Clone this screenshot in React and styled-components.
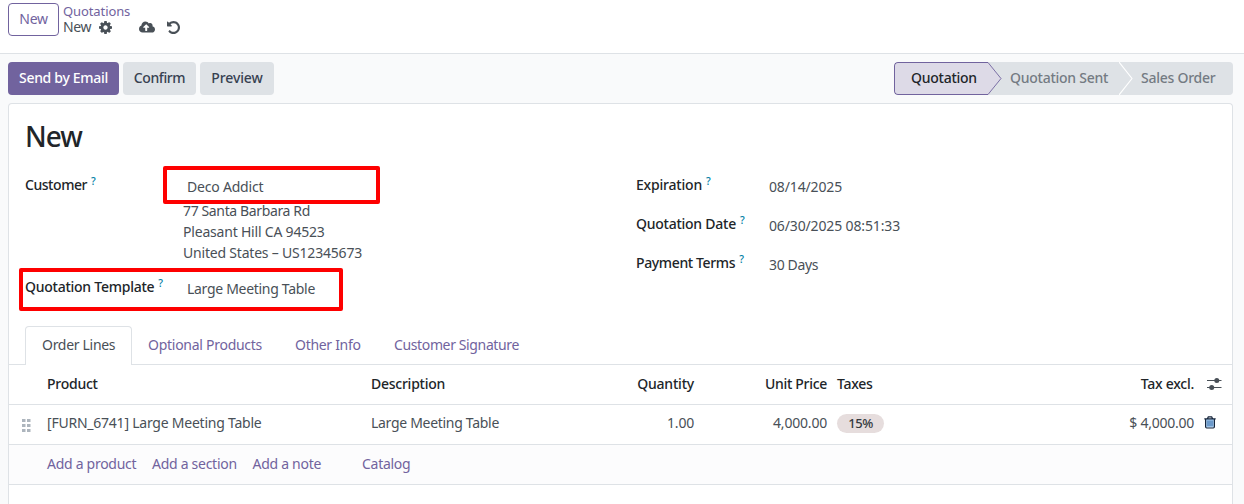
import React from 'react';
import styled, { createGlobalStyle } from 'styled-components';
import { FaCloudUploadAlt } from 'react-icons/fa';

const Global = createGlobalStyle`
  *, *::before, *::after { box-sizing: border-box; }
  body {
    margin: 0;
    background: #f9fafb;
    color: #495057;
    font: 400 14px/21px "Noto Sans", "Open Sans", sans-serif;
  }
  button { font: inherit; cursor: pointer; }
  svg { display: block; flex: none; }
`;

const Page = styled.div`
  height: 504px;
  overflow: hidden;
  display: flex;
  flex-direction: column;
`;

const ControlPanel = styled.header`
  height: 54px;
  flex: none;
  display: flex;
  align-items: flex-start;
  gap: 4px;
  padding: 3px 8px 0;
  background: #fff;
  border-bottom: 1px solid #dee2e6;
`;

const NewButton = styled.button`
  width: 51px;
  height: 33px;
  padding: 0 0 2px;
  border: 1px solid #71639e;
  border-radius: 4px;
  background: #fff;
  color: #71639e;
  letter-spacing: -0.3px;
`;

const Breadcrumb = styled.nav`
  display: flex;
  flex-direction: column;
`;

const CrumbLink = styled.a`
  color: #71639e;
  font-size: 13px;
  line-height: 17px;
  letter-spacing: -0.1px;
`;

const CrumbCurrent = styled.div`
  display: flex;
  align-items: center;
  height: 14px;
  line-height: 14px;
  letter-spacing: -0.35px;
`;

const CrumbName = styled.span`
  padding-bottom: 1px;
`;

const CrumbIcon = styled.span`
  margin-left: ${(p) => p.$gap}px;
  color: #495057;
`;

const Toolbar = styled.div`
  display: flex;
  flex: none;
  align-items: center;
  gap: 4px;
  height: 49px;
  padding: 0 11px 0 8px;
`;

const ActionButton = styled.button`
  width: ${(p) => p.$width}px;
  height: 33px;
  padding: 0 0 2px;
  border: 0;
  border-radius: 4px;
  background: ${(p) => (p.$primary ? '#71639e' : '#dee2e6')};
  color: ${(p) => (p.$primary ? '#fff' : '#374151')};
  font-weight: 500;
  letter-spacing: ${(p) => p.$ls}px;
  white-space: nowrap;
`;

const StatusBar = styled.div`
  display: flex;
  height: 33px;
  margin-left: auto;
  border-radius: 4px;
  overflow: hidden;
  background: #dee2e6;
`;

const Stage = styled.div`
  width: ${(p) => p.$width}px;
  padding: 5px 0 0 ${(p) => p.$pad}px;
  color: ${(p) => (p.$active ? '#212529' : '#747b83')};
  font-weight: 500;
  letter-spacing: -0.25px;
  white-space: nowrap;
  ${(p) => p.$active && `
    padding-top: 4px;
    background: #dddae7;
    border: 1px solid #71639e;
    border-right: 0;
    border-radius: 4px 0 0 4px;
  `}
`;

const Sheet = styled.main`
  position: relative;
  flex: 1;
  margin: 0 11px 0 8px;
  padding-top: 13px;
  background: #fff;
  border: 1px solid #dee2e6;
  border-bottom: 0;
  border-radius: 4px 4px 0 0;
`;

const Title = styled.h1`
  margin: 0 16px;
  color: #212529;
  font-size: 28px;
  font-weight: 500;
  line-height: 38px;
  letter-spacing: -1px;
`;

const Groups = styled.div`
  display: grid;
  grid-template-columns: 611px 1fr;
  height: 153px;
  padding: 19px 16px 0;
`;

const Group = styled.div`
  display: grid;
  grid-template-columns: ${(p) => p.$label}px 1fr;
  align-content: start;
  row-gap: ${(p) => p.$gap}px;
`;

const Label = styled.label`
  color: #212529;
  font-weight: 500;
  letter-spacing: ${(p) => p.$ls ?? -0.25}px;
  white-space: nowrap;
`;

const Help = styled.sup`
  margin-left: 4px;
  color: #0180a5;
  font-size: 10.5px;
  font-weight: 500;
  line-height: 0;
  vertical-align: 5px;
`;

const Value = styled.div`
  padding-top: 2px;
  letter-spacing: ${(p) => p.$ls ?? -0.2}px;
  white-space: nowrap;
`;

const Address = styled.div`
  padding: 3px 0 13px;
  margin-left: -4px;
`;

const AddressLine = styled.div`
  letter-spacing: ${(p) => p.$ls ?? -0.2}px;
`;

const Highlight = styled.div`
  position: absolute;
  left: ${(p) => p.$x}px;
  top: ${(p) => p.$y}px;
  width: ${(p) => p.$w}px;
  height: ${(p) => p.$h}px;
  border: 4px solid #fe0000;
  border-radius: 2px;
  pointer-events: none;
`;

const Tabs = styled.div`
  display: flex;
  height: 39px;
  margin-top: 18px;
  padding-left: 16px;
  border-bottom: 1px solid #dee2e6;
`;

const Tab = styled.div`
  height: 39px;
  width: ${(p) => p.$width}px;
  padding: 7px 0 0 ${(p) => (p.$active ? 16 : 15)}px;
  color: ${(p) => (p.$active ? '#495057' : '#71639e')};
  letter-spacing: ${(p) => p.$ls}px;
  white-space: nowrap;
  border: 1px solid transparent;
  border-bottom: 0;
  ${(p) => p.$active && `
    background: #fff;
    border-color: #dee2e6;
    border-radius: 4px 4px 0 0;
  `}
`;

const Line = styled.div`
  display: grid;
  grid-template-columns: 38px 324px 210px 113px 133px 10px 235px 122px 1fr;
  height: 40px;
  padding-bottom: ${(p) => (p.$head ? 2 : 4)}px;
  align-items: center;
  border-bottom: 1px solid #dee2e6;
  ${(p) => p.$head && 'color: #212529; font-weight: 500;'}
`;

const Cell = styled.div`
  grid-column: ${(p) => p.$col};
  text-align: ${(p) => (p.$num ? 'right' : 'left')};
  letter-spacing: ${(p) => p.$ls ?? -0.25}px;
  white-space: nowrap;
`;

const IconCell = styled.div`
  grid-column: ${(p) => p.$col};
  padding: ${(p) => p.$pad};
`;

const TaxTag = styled.span`
  display: block;
  width: 47px;
  height: 19px;
  margin-top: 2px;
  border-radius: 10px;
  background: #e6dddd;
  color: #343a40;
  font-size: 13px;
  font-weight: 500;
  line-height: 18px;
  letter-spacing: -0.4px;
  text-align: center;
`;

const AddRow = styled.div`
  display: flex;
  height: 40px;
  padding: 8px 0 0 38px;
  background: #fcfcfd;
  border-bottom: 1px solid #dee2e6;
`;

const AddLink = styled.a`
  width: ${(p) => p.$width}px;
  color: #71639e;
  letter-spacing: -0.28px;
  white-space: nowrap;
`;

function Gear() {
  return (
    <svg width="13" height="13" viewBox="0 128 1536 1536" fill="currentColor">
      <path d="M1024 896q0-106-75-181t-181-75-181 75-75 181 75 181 181 75 181-75 75-181zm512-109v222q0 12-8 23t-20 13l-185 28q-19 54-39 91 35 50 107 138 10 12 10 25t-9 23q-27 37-99 108t-94 71q-12 0-26-9l-138-108q-44 23-91 38-16 136-29 186-7 28-36 28h-222q-14 0-24.5-8.5t-11.5-21.5l-28-184q-49-16-90-37l-141 107q-10 9-25 9-14 0-25-11-126-114-165-168-7-10-7-23 0-12 8-23 15-21 51-66.5t54-70.5q-27-50-41-99l-183-27q-13-2-21-12.5t-8-23.5v-222q0-12 8-23t19-13l186-28q14-46 39-92-40-57-107-138-10-12-10-24 0-10 9-23 26-36 98.5-107.5t94.5-71.5q13 0 26 10l138 107q44-23 91-38 16-136 29-186 7-28 36-28h222q14 0 24.5 8.5t11.5 21.5l28 184q49 16 90 37l142-107q9-9 24-9 13 0 25 10 129 119 165 170 7 8 7 22 0 12-8 23-15 21-51 66.5t-54 70.5q26 50 41 98l183 28q13 2 21 12.5t8 23.5z" />
    </svg>
  );
}

function Undo() {
  return (
    <svg width="13" height="13" viewBox="0 128 1536 1536" fill="currentColor">
      <path d="M1536 896q0 156-61 298t-164 245-245 164-298 61q-172 0-327-72.5t-264-204.5q-7-10-6.5-22.5t8.5-20.5l137-138q10-9 25-9 16 2 23 12 73 95 179 147t225 52q104 0 198.5-40.5t163.5-109.5 109.5-163.5 40.5-198.5-40.5-198.5-109.5-163.5-163.5-109.5-198.5-40.5q-98 0-188 35.5t-160 101.5l137 138q31 30 14 69-17 40-59 40h-448q-26 0-45-19t-19-45v-448q0-42 40-59 39-17 69 14l130 129q107-101 244.5-156.5t284.5-55.5q156 0 298 61t245 164 164 245 61 298z" />
    </svg>
  );
}

function ActiveArrow() {
  return (
    <svg width="14" height="33" viewBox="0 0 14 33">
      <path d="M0 0L13 16.5L0 33Z" fill="#dddae7" />
      <path d="M0 .5L13 16.5L0 32.5" fill="none" stroke="#71639e" strokeWidth="0.9" />
    </svg>
  );
}

function StageArrow() {
  return (
    <svg width="14" height="33" viewBox="0 0 14 33">
      <path d="M0 0L13 16.5L0 33" fill="none" stroke="#fff" strokeWidth="1.1" />
    </svg>
  );
}

function DragHandle() {
  return (
    <svg width="9" height="13" viewBox="0 0 9 13" fill="#adb5bd">
      {[0, 5, 10].map((y) => (
        <React.Fragment key={y}>
          <rect x="0" y={y} width="3.5" height="3" />
          <rect x="5" y={y} width="3.5" height="3" />
        </React.Fragment>
      ))}
    </svg>
  );
}

function Sliders() {
  return (
    <svg width="15" height="12" viewBox="0 0 15 12">
      <path d="M0 2.5H14.5M0 9.5H14.5" stroke="#495057" strokeWidth="1.2" />
      <circle cx="9.8" cy="2.5" r="2.5" fill="#495057" />
      <circle cx="4.7" cy="9.5" r="2.5" fill="#495057" />
    </svg>
  );
}

function Trash() {
  return (
    <svg width="12" height="13" viewBox="0 0 12 13" fill="none">
      <path d="M2 3H10V11.5H2Z" fill="#a9cdf0" />
      <path d="M4 4.5V10.2M6 4.5V10.2M8 4.5V10.2" stroke="#2f67a5" strokeWidth="1" />
      <path d="M0.3 2.8H11.7M3.5 2.6L4.3 .9H7.7L8.5 2.6M1.6 3V10.8Q1.6 12 2.7 12H9.3Q10.4 12 10.4 10.8V3" stroke="#15253b" strokeWidth="1.2" />
    </svg>
  );
}

function FieldLabel({ children, ls }) {
  return (
    <Label $ls={ls}>
      {children}
      <Help>?</Help>
    </Label>
  );
}

export default function App() {
  return (
    <Page>
      <Global />
      <ControlPanel>
        <NewButton>New</NewButton>
        <Breadcrumb>
          <CrumbLink>Quotations</CrumbLink>
          <CrumbCurrent>
            <CrumbName>New</CrumbName>
            <CrumbIcon $gap={8}><Gear /></CrumbIcon>
            <CrumbIcon $gap={27}><FaCloudUploadAlt size={16} /></CrumbIcon>
            <CrumbIcon $gap={12}><Undo /></CrumbIcon>
          </CrumbCurrent>
        </Breadcrumb>
      </ControlPanel>

      <Toolbar>
        <ActionButton $primary $width={111} $ls={-0.3}>Send by Email</ActionButton>
        <ActionButton $width={73} $ls={-0.4}>Confirm</ActionButton>
        <ActionButton $width={74} $ls={-0.1}>Preview</ActionButton>
        <StatusBar>
          <Stage $active $width={94} $pad={16}>Quotation</Stage>
          <ActiveArrow />
          <Stage $width={117} $pad={8}>Quotation Sent</Stage>
          <StageArrow />
          <Stage $width={100} $pad={8}>Sales Order</Stage>
        </StatusBar>
      </Toolbar>

      <Sheet>
        <Title>New</Title>
        <Groups>
          <Group $label={162} $gap={0}>
            <FieldLabel ls={-0.45}>Customer</FieldLabel>
            <div>
              <Value>Deco Addict</Value>
              <Address>
                <AddressLine $ls={-0.37}>77 Santa Barbara Rd</AddressLine>
                <AddressLine>Pleasant Hill CA 94523</AddressLine>
                <AddressLine>United States – US12345673</AddressLine>
              </Address>
            </div>
            <FieldLabel>Quotation Template</FieldLabel>
            <Value $ls={-0.3}>Large Meeting Table</Value>
          </Group>
          <Group $label={133} $gap={16}>
            <FieldLabel ls={-0.2}>Expiration</FieldLabel>
            <Value $ls={-0.14}>08/14/2025</Value>
            <FieldLabel>Quotation Date</FieldLabel>
            <Value $ls={-0.14}>06/30/2025 08:51:33</Value>
            <FieldLabel ls={-0.37}>Payment Terms</FieldLabel>
            <Value $ls={-0.35}>30 Days</Value>
          </Group>
        </Groups>

        <Tabs>
          <Tab $active $width={107} $ls={-0.3}>Order Lines</Tab>
          <Tab $width={147} $ls={-0.27}>Optional Products</Tab>
          <Tab $width={99} $ls={-0.3}>Other Info</Tab>
          <Tab $width={160} $ls={-0.37}>Customer Signature</Tab>
        </Tabs>

        <Line $head>
          <Cell $col={2}>Product</Cell>
          <Cell $col={3}>Description</Cell>
          <Cell $col={4} $num $ls={-0.2}>Quantity</Cell>
          <Cell $col={5} $num $ls={-0.3}>Unit Price</Cell>
          <Cell $col={7}>Taxes</Cell>
          <Cell $col={8} $num>Tax excl.</Cell>
          <IconCell $col={9} $pad="0 0 0 13px"><Sliders /></IconCell>
        </Line>
        <Line>
          <IconCell $col={1} $pad="5px 0 0 13px"><DragHandle /></IconCell>
          <Cell $col={2} $ls={-0.23}>[FURN_6741] Large Meeting Table</Cell>
          <Cell $col={3} $ls={-0.3}>Large Meeting Table</Cell>
          <Cell $col={4} $num $ls={-0.2}>1.00</Cell>
          <Cell $col={5} $num $ls={-0.2}>4,000.00</Cell>
          <Cell $col={7}><TaxTag>15%</TaxTag></Cell>
          <Cell $col={8} $num $ls={-0.25}>$ 4,000.00</Cell>
          <IconCell $col={9} $pad="0 0 0 10px"><Trash /></IconCell>
        </Line>
        <AddRow>
          <AddLink $width={105}>Add a product</AddLink>
          <AddLink $width={100.5}>Add a section</AddLink>
          <AddLink $width={109.5}>Add a note</AddLink>
          <AddLink $width={60}>Catalog</AddLink>
        </AddRow>

        <Highlight $x={154} $y={62} $w={217} $h={38} />
        <Highlight $x={10} $y={164} $w={324} $h={43} />
      </Sheet>
    </Page>
  );
}
